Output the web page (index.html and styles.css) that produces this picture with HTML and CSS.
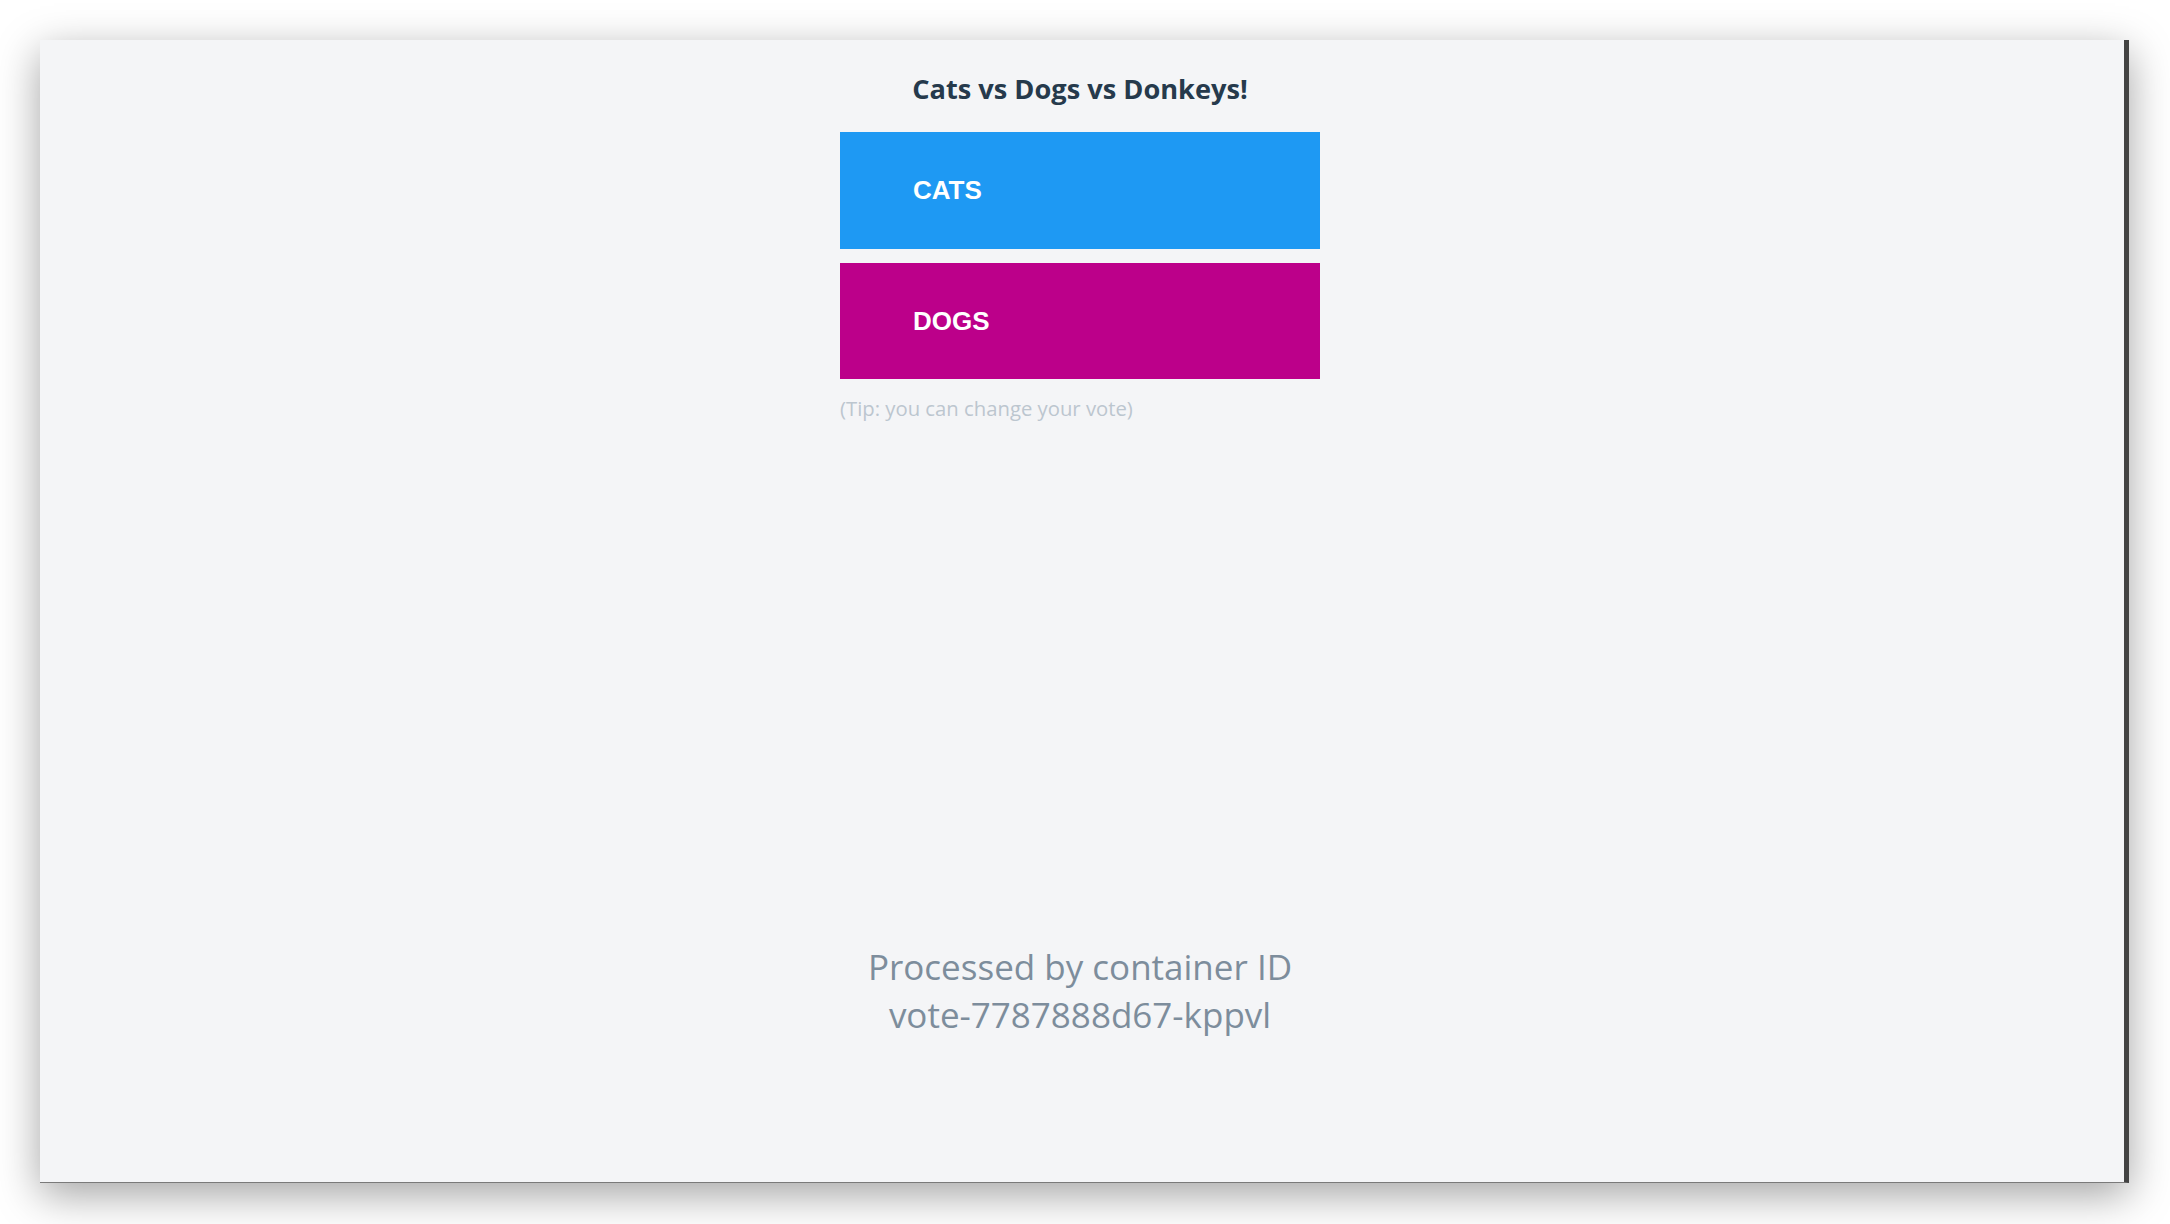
FILE: index.html
```html
<!DOCTYPE html>
<html lang="en">
<head>
<meta charset="utf-8">
<title>Cats vs Dogs vs Donkeys!</title>
<link rel="stylesheet" href="styles.css">
</head>
<body>
<div class="window">
  <div class="content">
    <h3 class="title">Cats vs Dogs vs Donkeys!</h3>
    <div class="choices">
      <button class="choice cats">CATS</button>
      <button class="choice dogs">DOGS</button>
      <p class="tip">(Tip: you can change your vote)</p>
    </div>
    <div class="footer">Processed by container ID<br>vote-7787888d67-kppvl</div>
  </div>
</div>
</body>
</html>
```
FILE: styles.css
```css
html, body {
  margin: 0;
  padding: 0;
  background: #ffffff;
}
body {
  padding: 40px 0 0 40px;
  width: 2170px;
  height: 1224px;
  box-sizing: border-box;
  overflow: hidden;
}
.window {
  width: 2089px;
  height: 1143px;
  box-sizing: border-box;
  background: #f4f5f7;
  border-right: 5px solid #434343;
  border-bottom: 1px solid #7a7a7a;
  box-shadow: 0 12px 40px rgba(0, 0, 0, 0.36);
}
.content {
  display: flex;
  flex-direction: column;
  align-items: center;
  padding-top: 30px;
  padding-right: 4px;
  font-family: "Open Sans", "Noto Sans", sans-serif;
}
.title {
  margin: 0;
  font-size: 27.2px;
  line-height: 38px;
  font-weight: 700;
  color: #263a4c;
}
.choices {
  margin-top: 24px;
  width: 480px;
  display: flex;
  flex-direction: column;
  gap: 14px;
}
.choice {
  display: block;
  width: 480px;
  height: 117px;
  border: 0;
  margin: 0;
  padding: 0 0 0 73px;
  text-align: left;
  font-family: "Liberation Sans", Arial, sans-serif;
  font-weight: 700;
  font-size: 26px;
  color: #ffffff;
}
.cats { background: #1e99f3; }
.dogs { background: #bc008a; height: 116px; }
.tip {
  margin: 1px 0 0 0;
  font-size: 20.3px;
  line-height: 28px;
  color: #bcc6cf;
}
.footer {
  margin-top: 521px;
  text-align: center;
  font-size: 35px;
  line-height: 48px;
  color: #7d8d9c;
}
```
